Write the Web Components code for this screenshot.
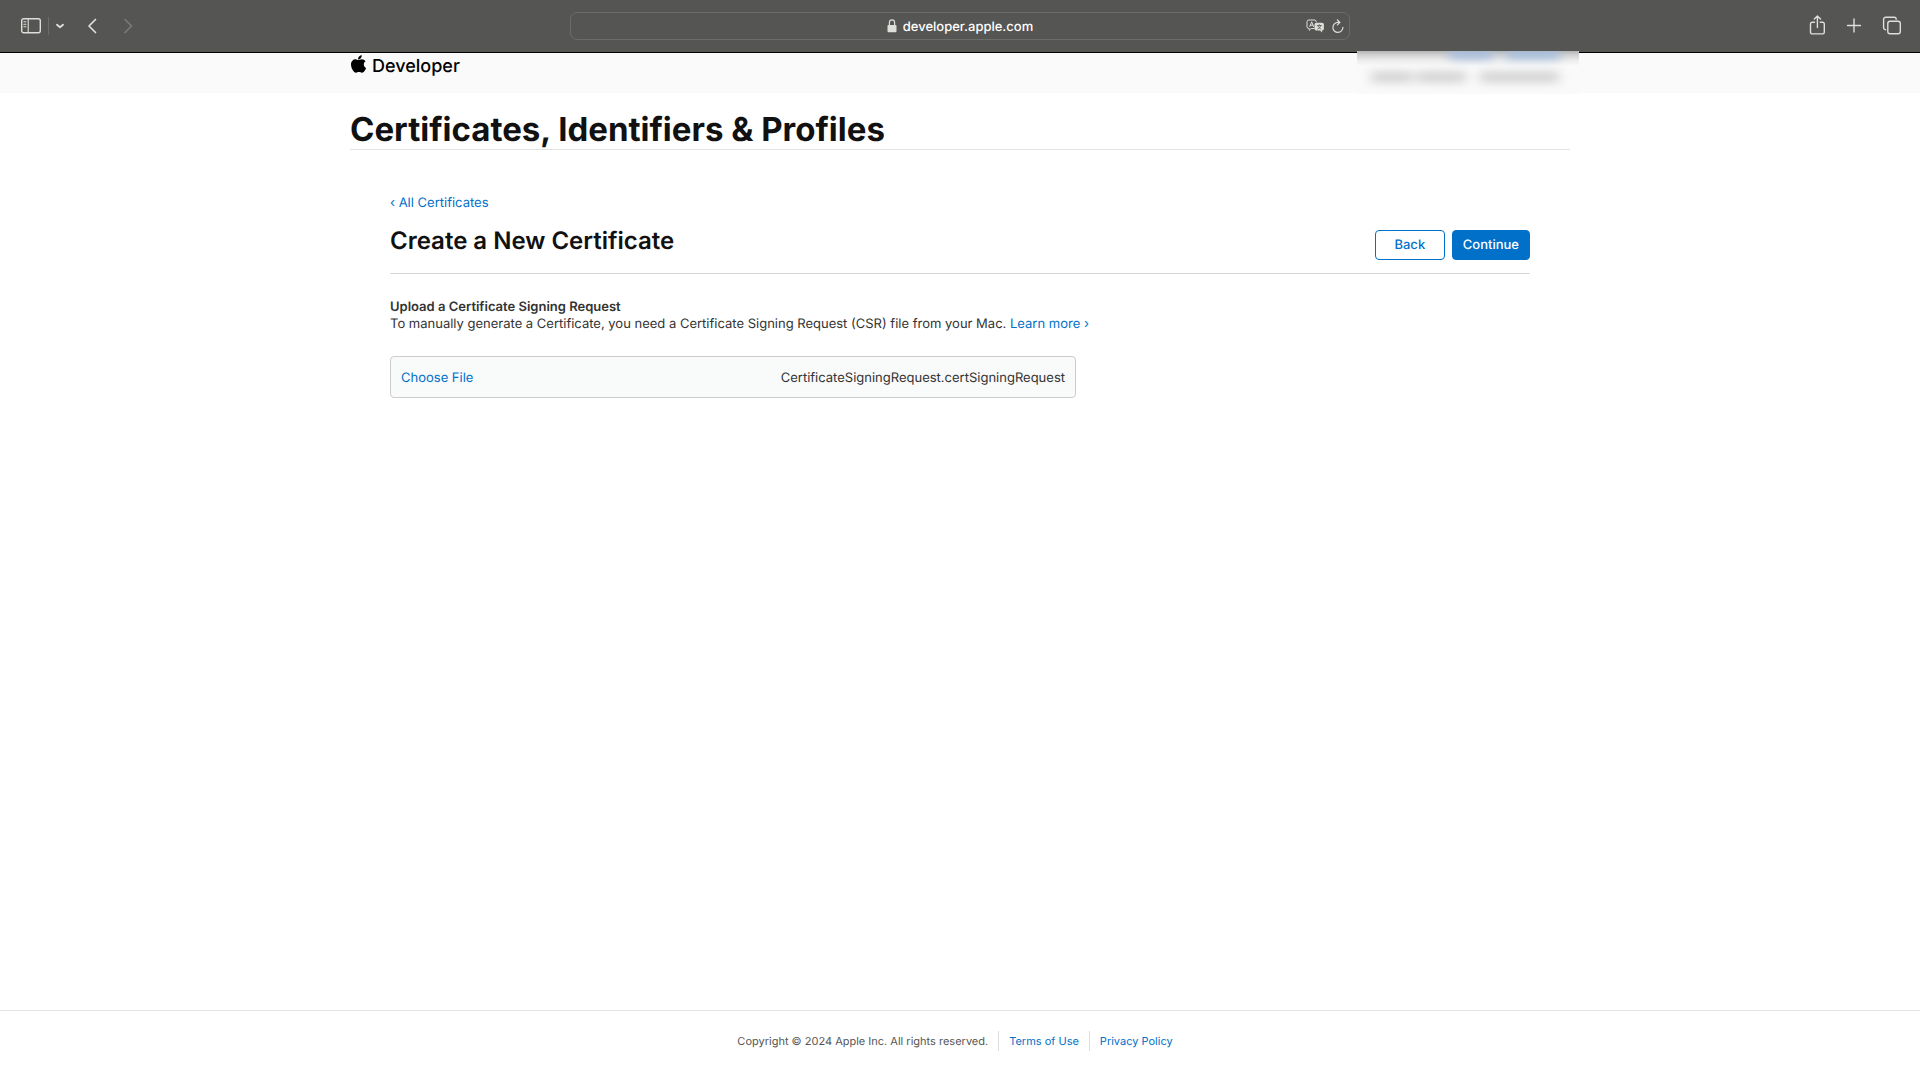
<!DOCTYPE html>
<html lang="en">
<head>
<meta charset="utf-8">
<title>Certificates, Identifiers &amp; Profiles</title>
<style>
  html, body { margin: 0; }
  body { font: 13px/17px Inter, "Liberation Sans", sans-serif; color: #333; background: #fff; text-rendering: geometricPrecision; }
</style>
</head>
<body>
<app-shell>
  <browser-bar slot="bar" address="developer.apple.com"></browser-bar>
  <site-header slot="header"></site-header>
  <page-title slot="title">Certificates, Identifiers &amp; Profiles</page-title>
  <certificate-form>
    <text-link slot="crumb" href="#certificates">‹ All Certificates</text-link>
    <span slot="heading">Create a New Certificate</span>
    <action-button slot="actions">Back</action-button>
    <action-button slot="actions" primary>Continue</action-button>
    <file-picker filename="CertificateSigningRequest.certSigningRequest">Choose File</file-picker>
  </certificate-form>
  <site-footer slot="footer"></site-footer>
</app-shell>

<script>
const define = (name, html, setup) => {
  const template = document.createElement('template');
  template.innerHTML = html;
  customElements.define(name, class extends HTMLElement {
    constructor() {
      super();
      this.attachShadow({ mode: 'open' }).append(template.content.cloneNode(true));
    }
    connectedCallback() { if (setup) setup(this, this.shadowRoot); }
  });
};

define('app-shell', `
  <style>
    :host { display: flex; flex-direction: column; min-height: 100vh; }
    main { flex: 1; width: calc(100% - 48px); max-width: 1220px; margin: 0 auto; }
  </style>
  <slot name="bar"></slot>
  <slot name="header"></slot>
  <main><slot name="title"></slot><slot></slot></main>
  <slot name="footer"></slot>`);

define('browser-bar', `
  <style>
    :host { display: grid; grid-template-columns: 1fr minmax(300px, 780px) 1fr; align-items: center;
      height: 52px; background: #555553; border-bottom: 1px solid #000; color: #dededb; }
    button { display: flex; padding: 0; border: 0; background: none; color: inherit; }
    button:disabled { color: #7b7b79; }
    svg { display: block; fill: none; stroke: currentColor; stroke-width: 1.4; stroke-linecap: round; stroke-linejoin: round; }
    .left, .right { display: flex; align-items: center; }
    .left { padding-left: 20px; }
    .right { justify-content: flex-end; gap: 20px; padding-right: 18px; }
    .rule { width: 1px; height: 18px; margin: 0 6px; background: #6c6c69; }
    .back { margin-left: 22px; }
    .forward { margin-left: 24px; }
    .field { display: grid; grid-template-columns: 1fr auto 1fr; align-items: center; box-sizing: border-box;
      height: 28px; border: 1px solid #6c6c69; border-radius: 7px; }
    .address { grid-column: 2; display: flex; align-items: center; gap: 6px; }
    input { field-sizing: content; padding: 2px 0 0; border: 0; outline: 0; background: none; color: #fff;
      font: 500 13px/16px Inter, "Liberation Sans", sans-serif; text-rendering: inherit; }
    .tools { display: flex; justify-content: flex-end; align-items: center; gap: 7px; padding-right: 5px; }
  </style>
  <div class="left">
    <button aria-label="Sidebar"><svg width="22" height="18" viewBox="0 0 22 18"><rect x="1.7" y="1.7" width="18.6" height="14.1" rx="2"/><path d="M8.2 1.7v14M3.9 4.8h2M3.9 7.3h2M3.9 9.8h2" stroke-width="1.1"/></svg></button>
    <span class="rule"></span>
    <button aria-label="Tab groups"><svg width="10" height="8" viewBox="0 0 10 8"><path d="M2 2.7 5 5.3 8 2.7" stroke-width="1.8"/></svg></button>
    <button class="back" aria-label="Back"><svg width="12" height="18" viewBox="0 0 12 18"><path d="M8.500 2.5 2 9 8.500 15.5" stroke-width="1.7"/></svg></button>
    <button class="forward" aria-label="Forward" disabled><svg width="12" height="18" viewBox="0 0 12 18"><path d="M2 2.5 8.5 9 2 15.5" stroke-width="1.7"/></svg></button>
  </div>
  <div class="field">
    <div class="address">
      <svg width="10" height="14" viewBox="0 0 10 14"><rect x=".5" y="6" width="9" height="7.3" rx="1" fill="currentColor" stroke="none"/><path d="M2.4 6V3.8a2.6 2.9 0 0 1 5.2 0V6" stroke-width="1.2"/></svg>
      <input aria-label="Address">
    </div>
    <div class="tools">
      <button aria-label="Translate"><svg width="19" height="14" viewBox="0 0 19 14"><path d="M8 9.5H5.2L3.2 11.3V9.5H2.8A1.8 1.8 0 0 1 1 7.700V2.800A1.8 1.8 0 0 1 2.800 1H8.500A1.800 1.800 0 0 1 10.300 2.800M3.800 7.600 5.700 2.800 7.500 7.600M4.400 6.200H7" stroke-width="1"/><path d="M10.300 3.800h5.800a1.800 1.800 0 0 1 1.800 1.800v4.200a1.800 1.800 0 0 1-1.800 1.800v1.900l-2.100-1.900h-3.700a1.800 1.800 0 0 1-1.800-1.800V5.600a1.800 1.800 0 0 1 1.800-1.800z" fill="currentColor" stroke="none"/><path d="M11.200 6.600h4.200M13.300 5.700v.9M11.800 10c1.700-.7 2.600-1.800 2.900-3.400M12.100 6.900c.5 1.500 1.500 2.500 2.700 3.100" stroke="#555553" stroke-width=".8"/></svg></button>
      <button aria-label="Reload"><svg width="12" height="15" viewBox="0 0 12 15"><path d="M10.900 8.300A5 5 0 1 1 5.900 3.400H7.500M5.400 1 7.900 3.400 5.400 5.900" stroke-width="1.200"/></svg></button>
    </div>
  </div>
  <div class="right">
    <button aria-label="Share"><svg width="17" height="22" viewBox="0 0 17 22"><path d="M5.500 7.200H3.200a1.700 1.700 0 0 0-1.700 1.700v8.300a1.700 1.700 0 0 0 1.700 1.700h10.400a1.700 1.700 0 0 0 1.700-1.700V8.900a1.700 1.700 0 0 0-1.700-1.700h-2.300M8.400 12.500V1.200M5.300 4 8.400 .9 11.500 4"/></svg></button>
    <button aria-label="New tab"><svg width="16" height="16" viewBox="0 0 16 16"><path d="M8 1v13M1.500 7.500h13"/></svg></button>
    <button aria-label="Tab overview"><svg width="20" height="20" viewBox="0 0 20 20"><rect x="5.800" y="5.300" width="12.500" height="12.500" rx="2.200"/><path d="M3.600 13.700a2 2 0 0 1-2-2V3.400a2.200 2.200 0 0 1 2.200-2.200h8.400a2 2 0 0 1 2 2"/></svg></button>
  </div>`,
  (host, root) => { root.querySelector('input').value = host.getAttribute('address'); });

define('account-haze', `
  <style>
    :host { display: block; overflow: hidden; background: linear-gradient(#b5b4b4, #d2d2d2 4px, #ebebeb 9px, #fafafa 15px); }
    svg { display: block; }
  </style>
  <svg width="222" height="43" viewBox="0 0 222 43" aria-hidden="true">
    <defs>
      <filter id="soft" filterUnits="userSpaceOnUse" x="-20" y="-20" width="262" height="83"><feGaussianBlur stdDeviation="6 5"/></filter>
    </defs>
    <g filter="url(#soft)">
      <path d="M92 3h44M149 3h54" stroke="#a3bde0" stroke-width="10"/>
      <path d="M14 26h42M60 26h49M123 26h79" stroke="#d2d2d2" stroke-width="11"/>
    </g>
  </svg>`);

define('site-header', `
  <style>
    :host { display: block; position: relative; background: #fafafa; }
    header { display: flex; align-items: flex-start; box-sizing: border-box; width: calc(100% - 48px); max-width: 1220px;
      height: 40px; margin: 0 auto; }
    a { display: flex; gap: 5px; color: #000; text-decoration: none; font-size: 18px; line-height: 24px; font-weight: 500; padding-top: 2px; }
    svg { display: block; }
    account-haze { position: absolute; top: -2px; left: calc(50% + 397px); }
  </style>
  <header>
    <a href="#developer"><svg width="17" height="19" viewBox="0 0 17 19" fill="#000"><path d="M11.700.3c.1 1.100-.3 2.100-.9 2.900-.7.800-1.700 1.300-2.700 1.200-.1-1 .4-2.100 1-2.800C9.800.8 10.900.3 11.700.3zM15.600 6.300c-1.100.7-1.800 1.800-1.800 3.200 0 1.600.9 2.900 2.300 3.500-.3.900-.7 1.700-1.200 2.500-.8 1.100-1.600 2.300-2.900 2.300-1.200 0-1.600-.7-3-.7s-1.900.7-3.100.7c-1.200 0-2.100-1.100-2.900-2.300C1.900 14.100 1 11.700 1 9.600c0-3.400 2.300-5.300 4.600-5.300 1.200 0 2.200.8 2.900.8.700 0 1.900-.8 3.300-.8 1.500 0 2.900.7 3.800 2z"/></svg>Developer</a>
  </header>
  <account-haze></account-haze>`);

define('page-title', `
  <style>
    :host { display: block; padding-top: 16px; border-bottom: 1px solid #e3e3e3; }
    h1 { margin: 0; font-size: 33px; line-height: 40px; font-weight: 700; color: #111; }
  </style>
  <h1><slot></slot></h1>`);

define('text-link', `
  <style>
    :host { display: inline; }
    a { color: #0070c9; text-decoration: none; }
  </style>
  <a><slot></slot></a>`,
  (host, root) => { root.querySelector('a').href = host.getAttribute('href'); });

define('action-button', `
  <style>
    :host { display: block; }
    button { box-sizing: border-box; min-width: 70px; height: 30px; padding: 0 10px 1px; border: 1px solid #0070c9; border-radius: 4px; background: #fff;
      color: #0070c9; font: 500 13px/16px Inter, "Liberation Sans", sans-serif; text-rendering: inherit; }
    :host([primary]) button { background: #0070c9; color: #fff; }
  </style>
  <button type="button"><slot></slot></button>`);

define('file-picker', `
  <style>
    :host { display: block; max-width: 686px; margin-top: 23px; }
    .box { display: flex; align-items: center; justify-content: space-between; box-sizing: border-box; height: 42px;
      padding: 2px 10px 0; border: 1px solid #ccc; border-radius: 4px; background: #f9fafa; }
    label { color: #0070c9; }
    input { position: absolute; width: 1px; height: 1px; opacity: 0; overflow: hidden; clip-path: inset(50%); }
  </style>
  <div class="box">
    <label for="file"><slot></slot></label>
    <input id="file" type="file">
    <output for="file"></output>
  </div>`,
  (host, root) => { root.querySelector('output').textContent = host.getAttribute('filename'); });

define('certificate-form', `
  <style>
    :host { display: block; padding: 45px 40px 40px; }
    .head { display: flex; justify-content: space-between; align-items: flex-start; margin-top: 12px;
      padding-bottom: 13px; border-bottom: 1px solid #d6d6d6; }
    h2 { margin: 0; font-size: 24px; line-height: 34px; font-weight: 600; color: #111; }
    .actions { display: flex; gap: 7px; padding-top: 6px; }
    h3 { margin: 25px 0 0; font-size: 13px; line-height: 17px; font-weight: 600; }
    p { margin: 0; }
  </style>
  <nav><slot name="crumb"></slot></nav>
  <div class="head">
    <h2><slot name="heading"></slot></h2>
    <div class="actions"><slot name="actions"></slot></div>
  </div>
  <h3>Upload a Certificate Signing Request</h3>
  <p>To manually generate a Certificate, you need a Certificate Signing Request (CSR) file from your Mac. <text-link href="#learn">Learn more ›</text-link></p>
  <slot></slot>`);

define('site-footer', `
  <style>
    :host { display: block; border-top: 1px solid #e3e3e3; font-size: 11px; line-height: 20px; color: #555; }
    footer { display: flex; justify-content: center; padding: 20px 10px 29px 0; }
    text-link { display: block; margin-left: 10px; padding-left: 10px; border-left: 1px solid #ddd; }
  </style>
  <footer>
    <span>Copyright © 2024 Apple Inc. All rights reserved.</span>
    <text-link href="#terms">Terms of Use</text-link>
    <text-link href="#privacy">Privacy Policy</text-link>
  </footer>`);
</script>
</body>
</html>
